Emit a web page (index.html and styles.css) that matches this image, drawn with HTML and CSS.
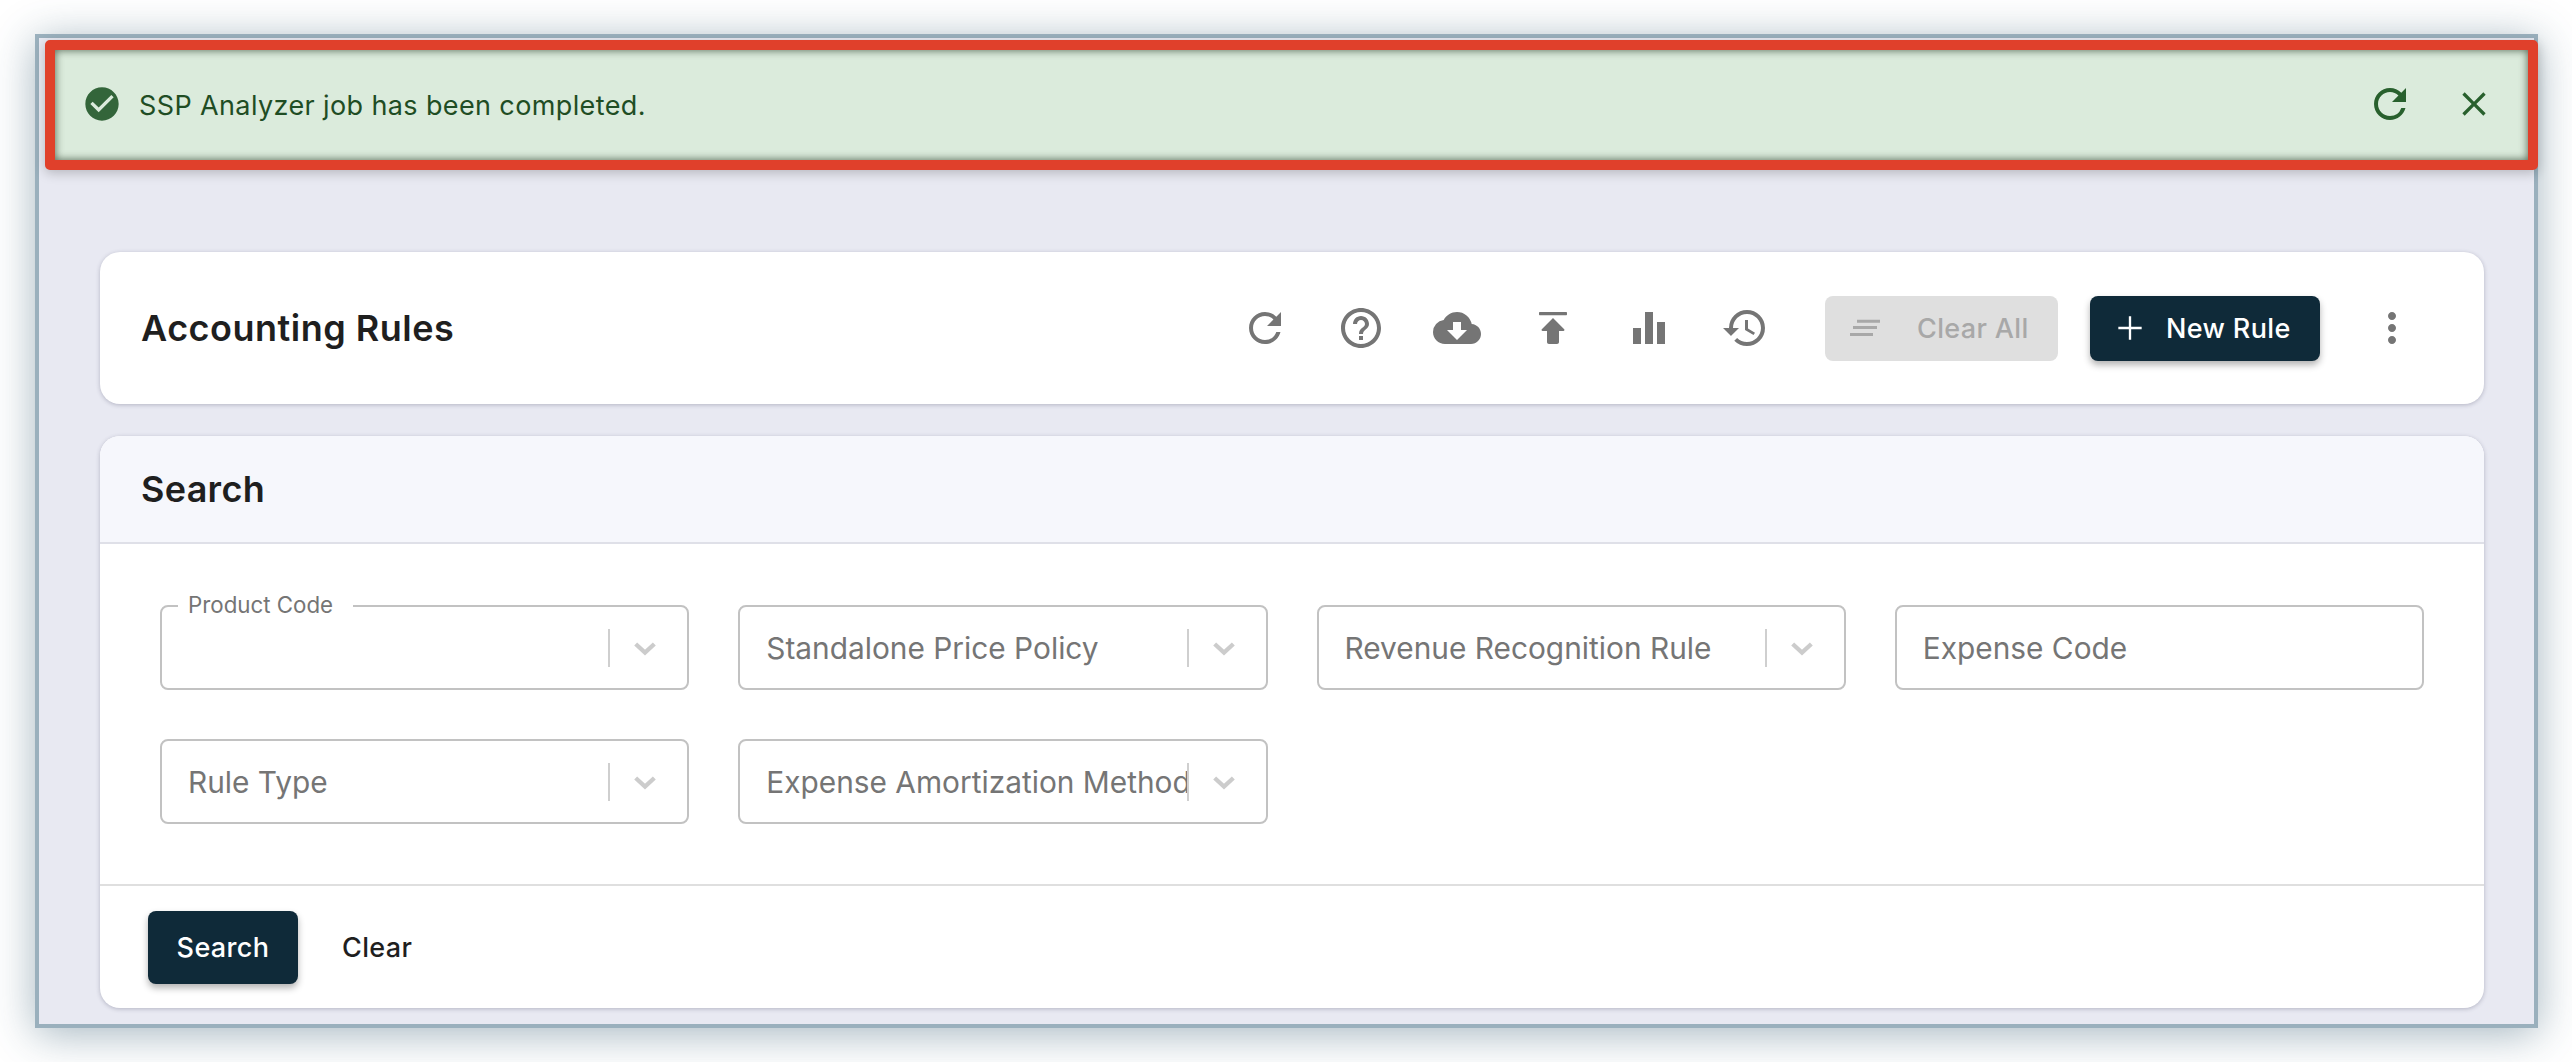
FILE: index.html
```html
<!DOCTYPE html>
<html lang="en">
<head>
<meta charset="utf-8">
<title>Accounting Rules</title>
<link rel="stylesheet" href="styles.css">
</head>
<body>
<div class="frame">
  <div class="banner">
    <svg class="banner-check" viewBox="0 0 24 24"><path d="M12 2C6.48 2 2 6.48 2 12s4.48 10 10 10 10-4.48 10-10S17.52 2 12 2zm-2 15l-5-5 1.41-1.41L10 14.17l7.59-7.59L19 8l-9 9z"/></svg>
    <span class="banner-text">SSP Analyzer job has been completed.</span>
    <svg class="banner-refresh" viewBox="0 0 24 24"><path d="M17.65 6.35A7.958 7.958 0 0012 4c-4.42 0-7.99 3.58-7.99 8s3.57 8 7.99 8c3.73 0 6.84-2.55 7.73-6h-2.08A5.99 5.99 0 0112 18c-3.31 0-6-2.69-6-6s2.69-6 6-6c1.66 0 3.14.69 4.22 1.78L13 11h7V4l-2.35 2.35z"/></svg>
    <svg class="banner-close" viewBox="0 0 24 24"><path d="M19 6.41L17.59 5 12 10.59 6.41 5 5 6.41 10.59 12 5 17.59 6.41 19 12 13.41 17.59 19 19 17.59 13.41 12z"/></svg>
  </div>

  <section class="card title-card">
    <h1 class="page-title">Accounting Rules</h1>
    <div class="toolbar">
      <svg class="tool" viewBox="0 0 24 24"><path d="M17.65 6.35A7.958 7.958 0 0012 4c-4.42 0-7.99 3.58-7.99 8s3.57 8 7.99 8c3.73 0 6.84-2.55 7.73-6h-2.08A5.99 5.99 0 0112 18c-3.31 0-6-2.69-6-6s2.69-6 6-6c1.66 0 3.14.69 4.22 1.78L13 11h7V4l-2.35 2.35z"/></svg>
      <svg class="tool" viewBox="0 0 24 24"><path d="M11 18h2v-2h-2v2zm1-16C6.48 2 2 6.48 2 12s4.48 10 10 10 10-4.48 10-10S17.52 2 12 2zm0 18c-4.41 0-8-3.59-8-8s3.59-8 8-8 8 3.59 8 8-3.59 8-8 8zm0-14c-2.21 0-4 1.79-4 4h2c0-1.1.9-2 2-2s2 .9 2 2c0 2-3 1.75-3 5h2c0-2.25 3-2.5 3-5 0-2.21-1.79-4-4-4z"/></svg>
      <svg class="tool" viewBox="0 0 24 24"><path d="M19.35 10.04A7.49 7.49 0 0012 4C9.11 4 6.6 5.64 5.35 8.04A5.994 5.994 0 000 14c0 3.31 2.69 6 6 6h13c2.76 0 5-2.24 5-5 0-2.64-2.05-4.78-4.65-4.96zM17 13l-5 5-5-5h3V9h4v4h3z"/></svg>
      <svg class="tool" viewBox="0 0 24 24"><path d="M5 4.500C5 4.200 5.200 4 5.500 4h13c.3 0 .5.2.5.5v.6c0 .3-.2.5-.5.5h-13c-.3 0-.5-.2-.5-.5v-.6zM12 7l5.600 5.600c.3.3.1.9-.4.9H15v5.500c0 .6-.4 1-1 1h-4c-.6 0-1-.4-1-1v-5.500H6.800c-.5 0-.7-.6-.4-.9L12 7z"/></svg>
      <svg class="tool" viewBox="0 0 24 24"><path d="M4 12h4v8H4zM10 4h4v16h-4zM16 9h4v11h-4z"/></svg>
      <svg class="tool" viewBox="0 0 24 24"><path d="M13 3a9 9 0 00-9 9H1l3.89 3.89.07.14L9 12H6c0-3.87 3.13-7 7-7s7 3.13 7 7-3.13 7-7 7c-1.93 0-3.68-.79-4.94-2.06l-1.42 1.42A8.954 8.954 0 0013 21a9 9 0 000-18zm-1 5v5l4.28 2.54.72-1.21-3.5-2.08V8H12z"/></svg>
    </div>
    <button class="btn btn-disabled" type="button">
      <svg class="btn-icon" viewBox="0 0 24 24"><path d="M7.200 7H21v1.800H7.200zM4.800 10.800h14.400v1.800H4.800zM3 15h13.800v1.800H3z"/></svg>
      Clear All
    </button>
    <button class="btn btn-primary btn-new" type="button">
      <svg class="btn-icon" viewBox="0 0 24 24"><path d="M19 12.700h-6.300V19h-1.400v-6.300H5v-1.400h6.300V5h1.400v6.300H19v1.400z"/></svg>
      New Rule
    </button>
    <svg class="tool kebab" viewBox="0 0 24 24"><path d="M12 8c1.100 0 2-.9 2-2s-.9-2-2-2-2 .9-2 2 .9 2 2 2zm0 2c-1.100 0-2 .9-2 2s.9 2 2 2 2-.9 2-2-.9-2-2-2zm0 6c-1.100 0-2 .9-2 2s.9 2 2 2 2-.9 2-2-.9-2-2-2z"/></svg>
  </section>

  <section class="card search-card">
    <header class="search-head"><h2 class="search-title">Search</h2></header>
    <div class="search-fields">
      <div class="field">
        <span class="field-label">Product Code</span>
        <span class="field-value"></span>
        <span class="field-sep"></span>
        <svg class="chev" viewBox="0 0 24 24"><path d="M5 9l7 6.500L19 9"/></svg>
      </div>
      <div class="field">
        <span class="field-value">Standalone Price Policy</span>
        <span class="field-sep"></span>
        <svg class="chev" viewBox="0 0 24 24"><path d="M5 9l7 6.500L19 9"/></svg>
      </div>
      <div class="field">
        <span class="field-value">Revenue Recognition Rule</span>
        <span class="field-sep"></span>
        <svg class="chev" viewBox="0 0 24 24"><path d="M5 9l7 6.500L19 9"/></svg>
      </div>
      <div class="field">
        <span class="field-value">Expense Code</span>
      </div>
      <div class="field">
        <span class="field-value">Rule Type</span>
        <span class="field-sep"></span>
        <svg class="chev" viewBox="0 0 24 24"><path d="M5 9l7 6.500L19 9"/></svg>
      </div>
      <div class="field">
        <span class="field-value">Expense Amortization Method</span>
        <span class="field-sep"></span>
        <svg class="chev" viewBox="0 0 24 24"><path d="M5 9l7 6.500L19 9"/></svg>
      </div>
    </div>
    <footer class="search-foot">
      <button class="btn btn-primary btn-search" type="button">Search</button>
      <button class="btn btn-plain" type="button">Clear</button>
    </footer>
  </section>
</div>
</body>
</html>
```

FILE: styles.css
```css
* { box-sizing: border-box; }

html, body {
  margin: 0;
  height: 100%;
  background: #fff;
}

body {
  font-family: "Inter", "Liberation Sans", sans-serif;
  padding: 34px 34px 34px 35px;
  overflow: hidden;
}

.frame {
  height: 994px;
  border: 4px solid #9ab0bd;
  background: #e8e9f2;
  box-shadow: 0 6px 40px rgba(40, 80, 105, 0.42);
  padding: 2px 50px 0 61px;
}

.banner {
  display: flex;
  align-items: center;
  height: 130px;
  margin: 0 -54px 0 -55px;
  padding: 0 34px 0 27px;
  border: 10px solid #e0402b;
  border-radius: 5px;
  background: #dbebdc;
  box-shadow: inset 0 0 8px rgba(30, 50, 30, 0.75), 0 3px 12px rgba(0, 0, 0, 0.22);
  color: #1f4d24;
}

.banner-check {
  width: 40px;
  height: 40px;
  fill: #33653a;
  flex: none;
  margin: -2px 17px 0 0;
}

.banner-text {
  flex: 1;
  font-size: 27px;
  letter-spacing: 0.38px;
}

.banner-refresh {
  width: 48px;
  height: 48px;
  fill: #28602d;
  margin: -2px 40px 0 0;
}

.banner-close {
  width: 40px;
  height: 40px;
  margin-top: -2px;
  fill: #28602d;
}

.card {
  background: #fff;
  border-radius: 20px;
  box-shadow: 0 1px 4px rgba(60, 60, 90, 0.3);
}

.title-card {
  display: flex;
  align-items: center;
  height: 152px;
  margin-top: 82px;
  padding: 0 68px 0 41px;
}

.page-title {
  flex: 1;
  margin: 0;
  font-size: 36px;
  font-weight: 600;
  letter-spacing: 0.5px;
  color: #1f1f1f;
}

.toolbar {
  display: flex;
  gap: 48px;
  margin-right: 56px;
}

.tool {
  display: block;
  width: 48px;
  height: 48px;
  fill: #757575;
  flex: none;
}

.btn {
  display: inline-flex;
  align-items: center;
  justify-content: center;
  border: 0;
  border-radius: 8px;
  font-family: inherit;
  font-size: 27px;
  font-weight: 500;
  letter-spacing: 0.35px;
}

.btn-icon {
  width: 40px;
  height: 40px;
  fill: currentColor;
  flex: none;
}

.btn-disabled {
  width: 233px;
  height: 65px;
  justify-content: flex-start;
  padding-left: 20px;
  gap: 32px;
  background: #dfdfdf;
  color: #a8a8a8;
}

.btn-primary {
  background: #0f2a39;
  color: #fff;
  box-shadow: 0 4px 7px rgba(0, 0, 0, 0.3);
}

.btn-new {
  width: 230px;
  height: 65px;
  justify-content: flex-start;
  padding-left: 20px;
  gap: 16px;
  margin: 0 48px 0 32px;
}

.search-card {
  margin-top: 32px;
  height: 572px;
  display: flex;
  flex-direction: column;
}

.search-head {
  height: 108px;
  display: flex;
  align-items: center;
  padding-left: 41px;
  background: #f6f7fc;
  border-bottom: 2px solid #dfe0e8;
  border-radius: 20px 20px 0 0;
}

.search-title {
  margin: 0;
  font-size: 36px;
  font-weight: 600;
  letter-spacing: 0.3px;
  color: #1f1f1f;
}

.search-fields {
  display: grid;
  grid-template-columns: repeat(4, minmax(0, 1fr));
  grid-auto-rows: 85px;
  gap: 49px;
  flex: 1;
  padding: 61px 60px 0;
  border-bottom: 2px solid #dfdfdf;
}

.field {
  position: relative;
  display: flex;
  align-items: center;
  padding: 0 26px;
  border: 2px solid #c2c2c2;
  border-radius: 8px;
  background: #fff;
}

.field-label {
  position: absolute;
  left: 16px;
  top: -15px;
  padding: 0 20px 0 10px;
  background: #fff;
  font-size: 22.3px;
  line-height: 26px;
  color: #757575;
}

.field-value {
  flex: 1;
  min-width: 0;
  font-size: 29.85px;
  color: #757575;
  white-space: nowrap;
}

.field-sep {
  flex: none;
  width: 2px;
  height: 38px;
  margin-right: 19px;
  background: #cfcfcf;
}

.chev {
  flex: none;
  width: 32px;
  height: 32px;
  fill: none;
  stroke: #cccccc;
  stroke-width: 3.2;
}

.search-foot {
  height: 122px;
  display: flex;
  align-items: center;
  gap: 44px;
  padding: 0 0 0 48px;
}

.btn-search {
  width: 150px;
  height: 73px;
}

.btn-plain {
  background: none;
  color: #1f1f1f;
  padding: 0;
}
```
